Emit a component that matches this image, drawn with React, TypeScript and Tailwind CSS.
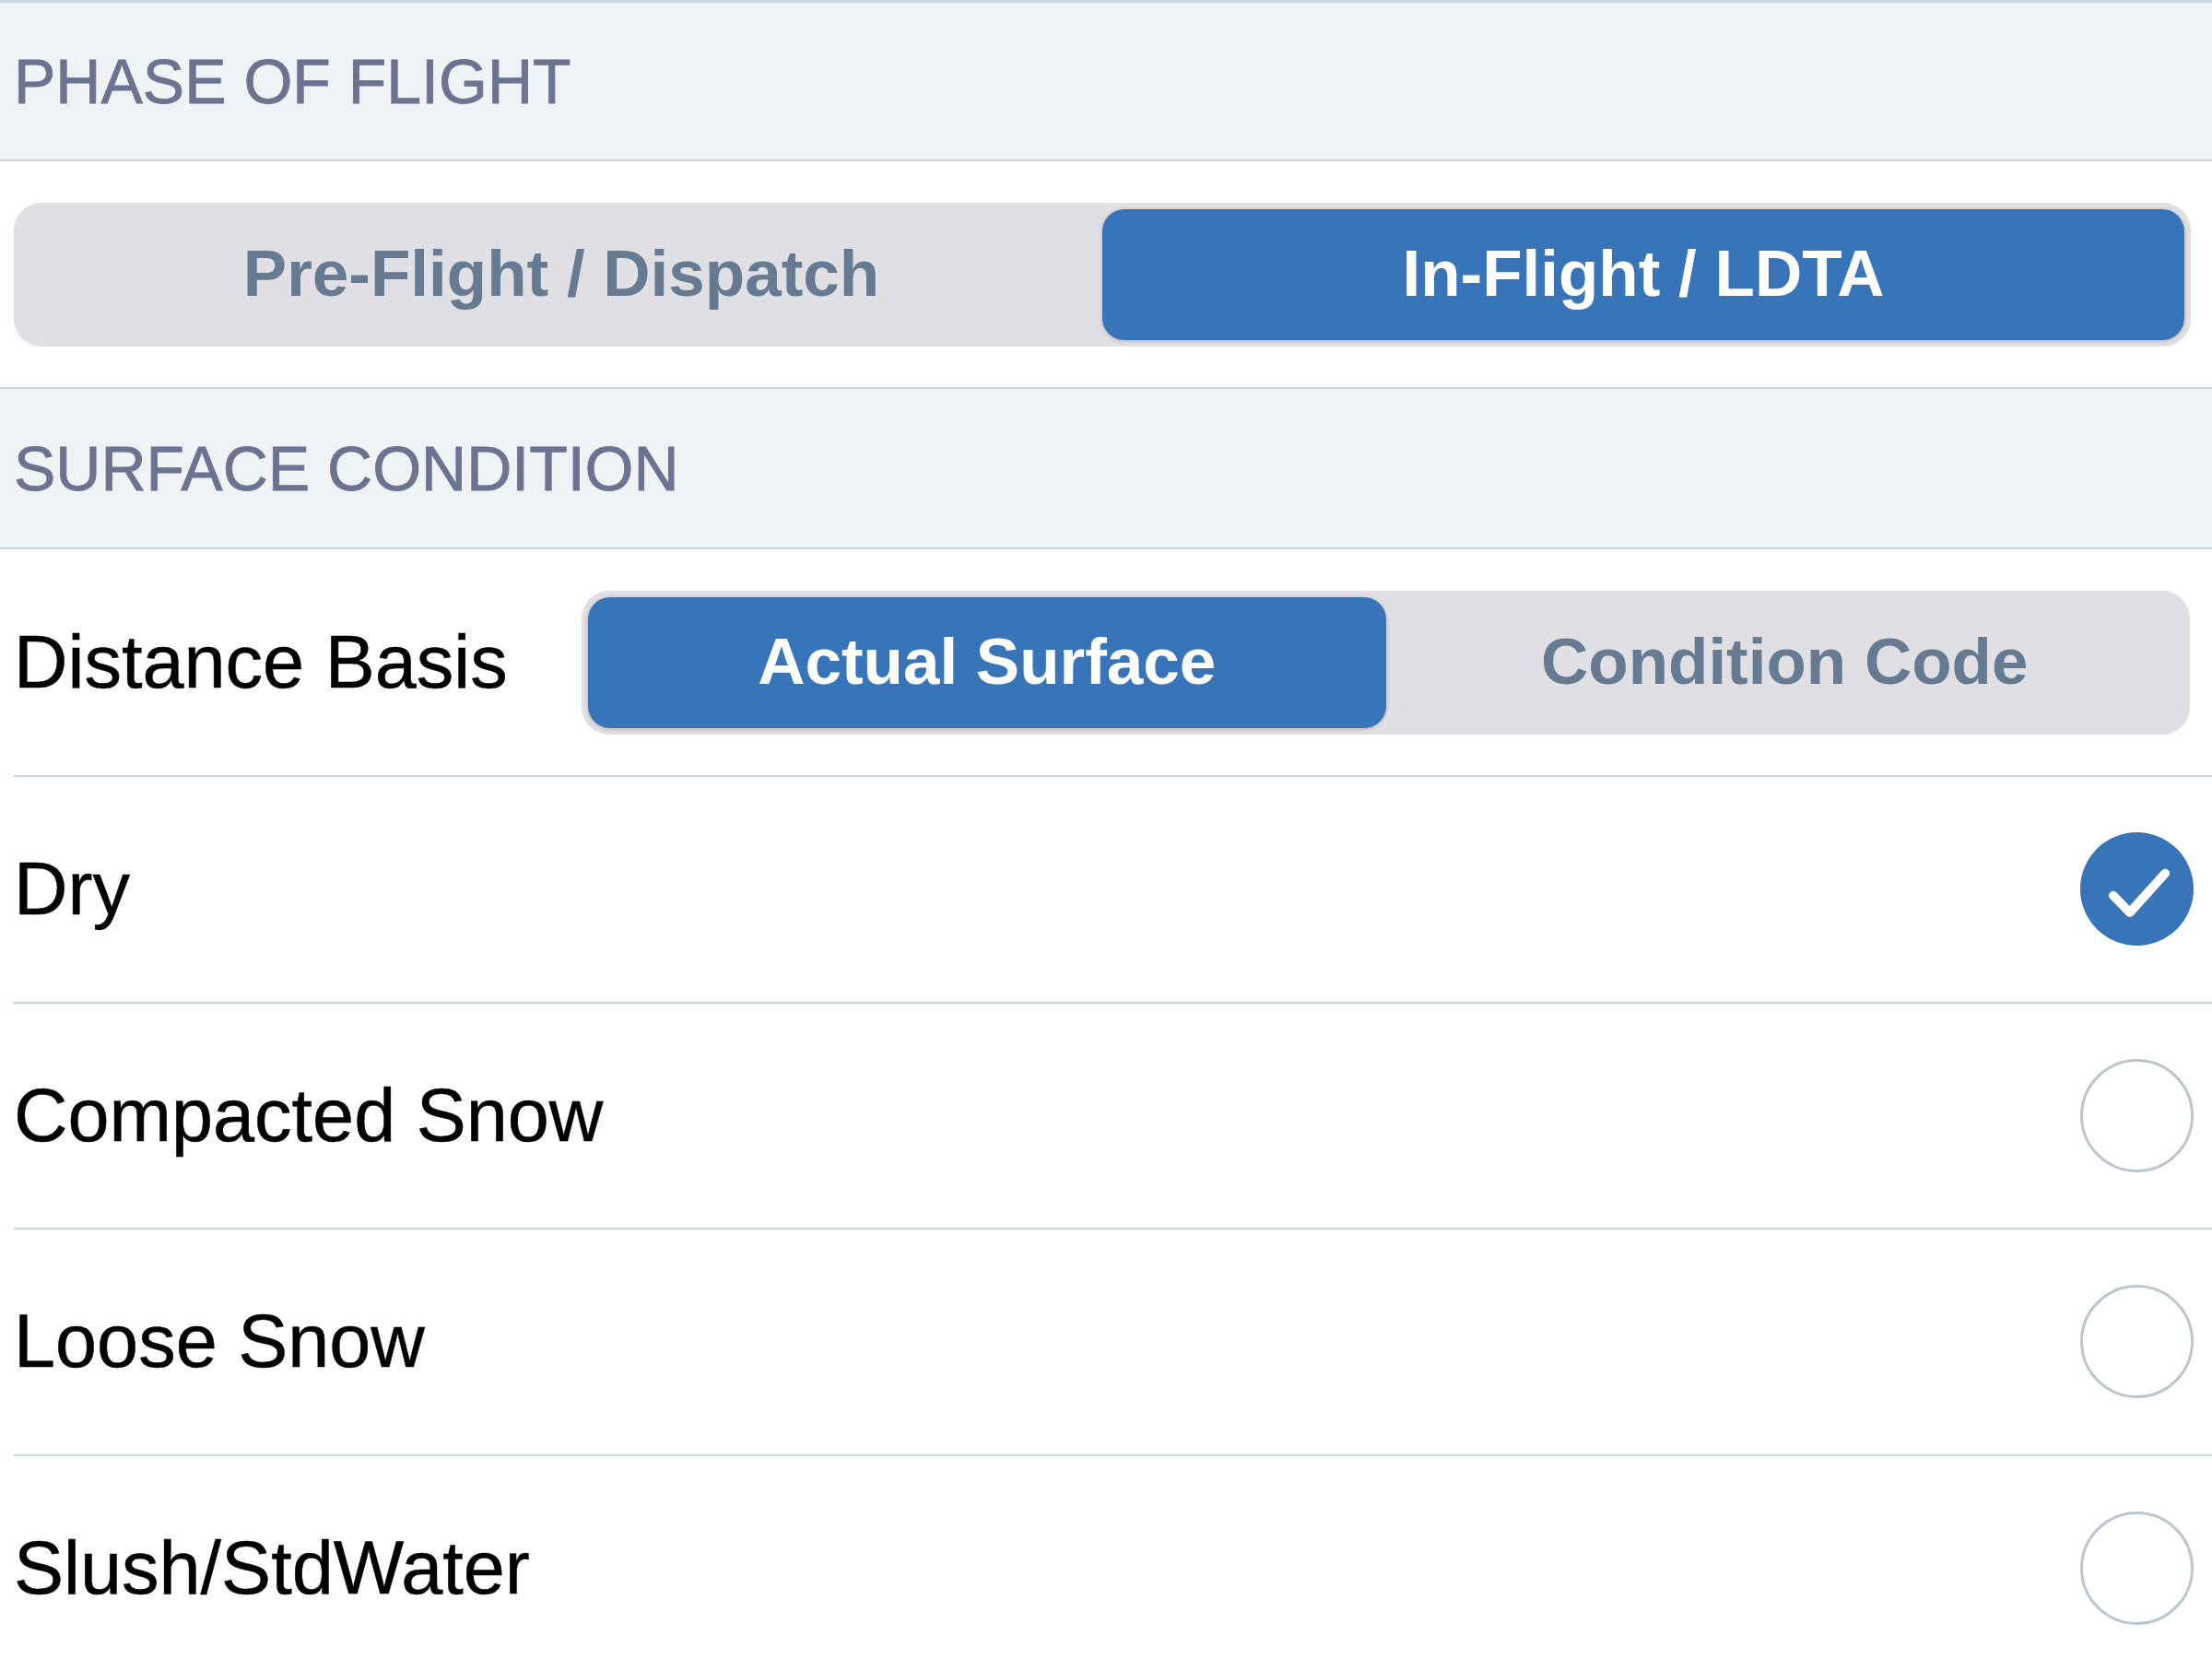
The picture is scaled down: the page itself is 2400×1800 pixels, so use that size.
import React from "react";

type SegmentProps = {
  options: string[];
  selected: number;
};

function Segmented({ options, selected }: SegmentProps) {
  return (
    <div className="grid h-[156px] w-full grid-cols-2 rounded-[30px] bg-[#e0dfe3] p-[7px]">
      {options.map((opt, i) =>
        i === selected ? (
          <div
            key={opt}
            className="flex items-center justify-center rounded-[24px] bg-[#3875b8] text-[71px] font-bold text-white shadow-[0_1px_4px_rgba(0,0,0,0.22)]"
          >
            {opt}
          </div>
        ) : (
          <div
            key={opt}
            className="flex items-center justify-center text-[71px] font-bold text-[#667b92]"
          >
            {opt}
          </div>
        )
      )}
    </div>
  );
}

function SectionHeader({ title, height }: { title: string; height: string }) {
  return (
    <div
      className={`flex items-center border-b-2 border-[#cad5de] bg-[#eff3f6] px-[15px] text-[68px] text-[#6c7391] [-webkit-text-stroke:0.8px_#6c7391] ${height}`}
    >
      {title}
    </div>
  );
}

function Radio({ checked }: { checked: boolean }) {
  if (checked) {
    return (
      <svg width="123" height="123" viewBox="0 0 24 24" className="shrink-0">
        <circle cx="12" cy="12" r="12" fill="#3875b8" />
        <path
          d="M7 13.4 L10.5 17 L18 8.7"
          fill="none"
          stroke="#ffffff"
          strokeWidth="1.9"
          strokeLinecap="round"
          strokeLinejoin="round"
        />
      </svg>
    );
  }
  return (
    <div className="h-[123px] w-[123px] shrink-0 rounded-full border-[3px] border-[#bcc6d0] bg-white" />
  );
}

const surfaces = [
  { name: "Dry", checked: true },
  { name: "Compacted Snow", checked: false },
  { name: "Loose Snow", checked: false },
  { name: "Slush/StdWater", checked: false },
];

export default function App() {
  return (
    <div
      className="h-[1800px] w-[2400px] overflow-hidden border-t-[3px] border-[#cad5de] bg-white"
      style={{ fontFamily: '"Liberation Sans", Arial, sans-serif' }}
    >
      <SectionHeader title="PHASE OF FLIGHT" height="h-[172px]" />

      <div className="flex h-[247px] items-center border-b-2 border-[#cad5de] pl-[15px] pr-[23px]">
        <Segmented options={["Pre-Flight / Dispatch", "In-Flight / LDTA"]} selected={1} />
      </div>

      <SectionHeader title="SURFACE CONDITION" height="h-[174px]" />

      <div className="ml-[15px] flex h-[247px] items-center border-b-2 border-[#cad5de] pr-[24px]">
        <div className="w-[616px] shrink-0 text-[81px] text-black [-webkit-text-stroke:0.5px_black]">
          Distance Basis
        </div>
        <div className="flex-1">
          <Segmented options={["Actual Surface", "Condition Code"]} selected={0} />
        </div>
      </div>

      {surfaces.map((s) => (
        <div
          key={s.name}
          className="ml-[15px] flex h-[245.5px] items-center justify-between border-b-2 border-[#cad5de] pr-[20px]"
        >
          <span className="text-[81px] text-black [-webkit-text-stroke:0.5px_black]">{s.name}</span>
          <Radio checked={s.checked} />
        </div>
      ))}
    </div>
  );
}
